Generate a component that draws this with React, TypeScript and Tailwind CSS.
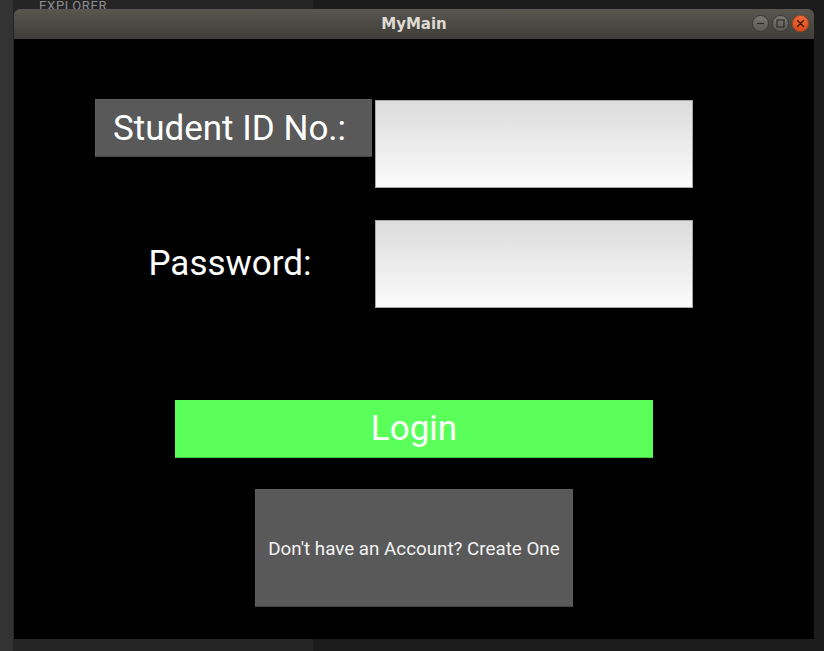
import type { FC } from "react";

const TitleButton: FC<{ kind: "min" | "max" | "close" }> = ({ kind }) => {
  const base =
    "flex h-[17px] w-[17px] items-center justify-center rounded-full border";
  if (kind === "close") {
    return (
      <div className={`${base} border-[#b8401a] bg-gradient-to-b from-[#f06a3a] to-[#d9491b]`}>
        <svg width="9" height="9" viewBox="0 0 9 9">
          <path d="M1.5 1.5l6 6M7.5 1.5l-6 6" stroke="#3a1a0c" strokeWidth="1.3" strokeLinecap="round" />
        </svg>
      </div>
    );
  }
  return (
    <div className={`${base} border-[#3b3a36] bg-gradient-to-b from-[#797873] to-[#5a5954]`}>
      {kind === "min" ? (
        <svg width="9" height="9" viewBox="0 0 9 9">
          <path d="M1 4.5h7" stroke="#2f2e2b" strokeWidth="1.3" />
        </svg>
      ) : (
        <svg width="9" height="9" viewBox="0 0 9 9">
          <rect x="1" y="1" width="7" height="7" fill="none" stroke="#2f2e2b" strokeWidth="1.2" />
        </svg>
      )}
    </div>
  );
};

const App: FC = () => {
  return (
    <div
      className="relative flex h-[651px] w-[824px] overflow-hidden bg-[#1e1e1e]"
      style={{ fontFamily: "Roboto, 'Liberation Sans', sans-serif" }}
    >
      {/* Desktop behind the window */}
      <div className="h-full w-[13px] bg-[#333333]" />
      <div className="h-full w-[300px] bg-[#252526]">
        <div className="-mt-[1px] pl-[26px] text-[13px] leading-[13px] tracking-[0.7px] text-[#8e8e8e]">
          EXPLORER
        </div>
      </div>
      <div className="h-full flex-1 bg-[#1c1c1c]" />

      {/* Window */}
      <div className="absolute left-[14px] top-[9px] flex w-[800px] flex-col">
        {/* Title bar */}
        <div className="relative flex h-[30px] items-center justify-center rounded-t-[6px] bg-gradient-to-b from-[#58564f] to-[#3e3d39]">
          <span
            className="text-[15px] font-bold text-[#dfdbd2]"
            style={{ fontFamily: "'DejaVu Sans', sans-serif" }}
          >
            MyMain
          </span>
          <div className="absolute right-[5px] top-[6px] flex gap-[3px]">
            <TitleButton kind="min" />
            <TitleButton kind="max" />
            <TitleButton kind="close" />
          </div>
        </div>

        {/* Content */}
        <div className="flex h-[600px] flex-col bg-black pt-[60px]">
          {/* Student ID row */}
          <div className="flex items-start pl-[81px]">
            <div className="flex h-[58px] w-[277px] items-center justify-center rounded-[1px] border border-[#606060] border-b-[#474747] bg-[#595959] pr-[8px] pt-[3px] text-[35px] text-white">
              Student ID No.:
            </div>
            <div className="ml-[3px] mt-[1px] h-[88px] w-[318px] border border-[#a8a8a8] bg-gradient-to-b from-[#dcdcdc] to-[#fbfbfb]" />
          </div>

          {/* Password row */}
          <div className="mt-[32px] flex items-start pl-[81px]">
            <div className="flex h-[88px] w-[277px] items-center justify-center pr-[7px] pt-[1px] text-[35px] text-white">
              Password:
            </div>
            <div className="ml-[3px] h-[88px] w-[318px] border border-[#a8a8a8] bg-gradient-to-b from-[#dcdcdc] to-[#fbfbfb]" />
          </div>

          {/* Login */}
          <div className="mt-[92px] flex justify-center">
            <button className="flex h-[58px] w-[478px] items-center justify-center rounded-[1px] border border-[#5aff5a] border-b-[#42c842] bg-[#5aff5a] pt-[1px] text-[35px] text-white">
              Login
            </button>
          </div>

          {/* Create account */}
          <div className="mt-[31px] flex justify-center">
            <button className="flex h-[118px] w-[318px] items-center justify-center rounded-[1px] border border-[#5f5f5f] border-b-[#444444] bg-[#595959] pt-[3px] text-[18.8px] text-[#f2f2f2]">
              Don't have an Account? Create One
            </button>
          </div>
        </div>
      </div>
    </div>
  );
};

export default App;
